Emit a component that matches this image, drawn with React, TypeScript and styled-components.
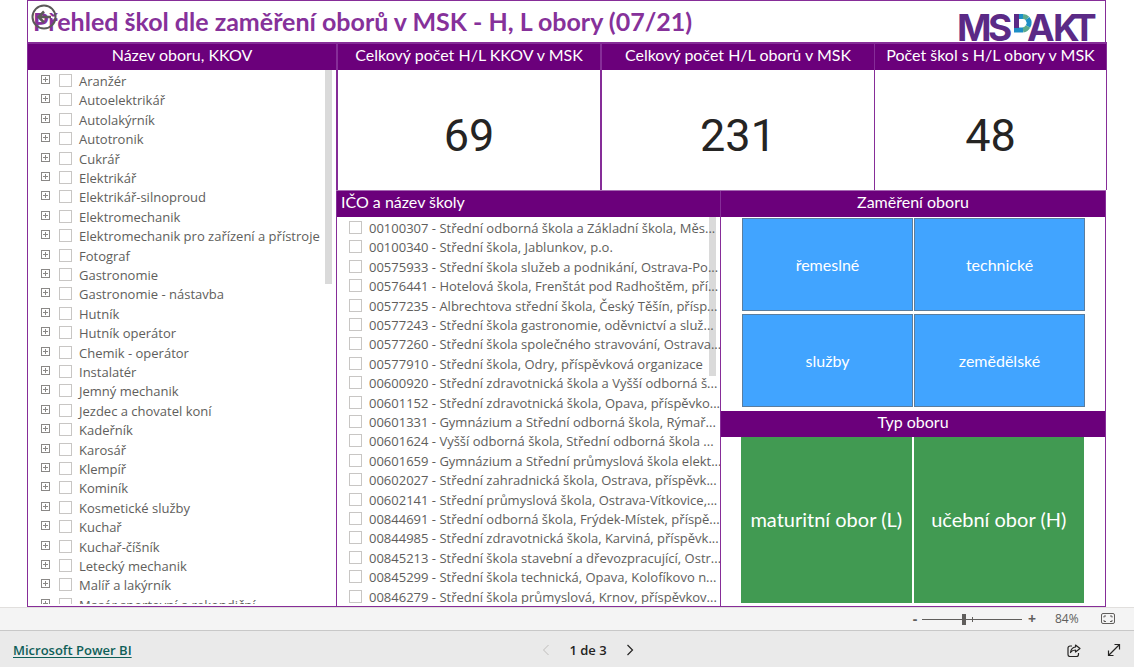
import React from 'react';
import styled, { createGlobalStyle } from 'styled-components';

const Global = createGlobalStyle`
  *, *::before, *::after { box-sizing: border-box; }
  html, body { margin: 0; padding: 0; background: #fff; }
  button, input { font: inherit; margin: 0; }
`;

const purple = '#6b007b';
const line = '#862d98';
const uiFont = `'Open Sans', 'Noto Sans', sans-serif`;
const headFont = `Lato, 'Open Sans', sans-serif`;

const Page = styled.div`
  display: flex;
  flex-direction: column;
  height: 100vh;
  min-height: 480px;
  font-family: ${uiFont};
  color: #605e5c;
`;

const Report = styled.main`
  flex: 1;
  min-height: 0;
  display: flex;
  flex-direction: column;
  padding: 0 27px;
`;

const TitleBar = styled.header`
  position: relative;
  display: flex;
  align-items: center;
  justify-content: space-between;
  height: 42px;
  flex: none;
  margin-right: 1px;
  padding: 0 10px 0 5px;
  border: 1px solid ${line};
  border-bottom: 0;
`;

const Title = styled.h1`
  margin: 0;
  padding-bottom: 2px;
  font: 700 25px/38px ${headFont};
  color: #86319a;
  white-space: nowrap;
`;

const BackButton = styled.button`
  position: absolute;
  left: 3px;
  top: 3px;
  width: 26px;
  height: 26px;
  padding: 0;
  border: 0;
  background: none;
  color: #5b5a58;
  svg { display: block; }
`;

const Logo = styled.svg`
  display: block;
  flex: none;
  align-self: flex-end;
  overflow: visible;
`;

const Body = styled.div`
  flex: 1;
  min-height: 0;
  display: grid;
  grid-template-columns: 309fr 771fr;
  border-top: 2px solid ${line};
`;

const Side = styled.div`
  min-height: 0;
  min-width: 0;
  display: flex;
  flex-direction: column;
`;

const Cards = styled.div`
  display: grid;
  grid-template-columns: 264fr 274fr 233fr;
  height: 146px;
  flex: none;
`;

const Lower = styled.div`
  flex: 1;
  min-height: 0;
  display: grid;
  grid-template-columns: 384fr 386fr;
  margin-right: 1px;
  border-top: 1px solid #a66bb2;
`;

const Panel = styled.section<{ $last?: boolean; $grow?: number; $edge?: number }>`
  display: flex;
  flex-direction: column;
  min-width: 0;
  min-height: 0;
  flex: ${p => p.$grow || 'none'};
  border: 0 solid ${line};
  border-left-width: ${p => p.$edge || 1}px;
  border-right-width: ${p => (p.$last ? 1 : 0)}px;
`;

const Framed = styled(Panel)`
  border-bottom-width: 1px;
`;

const PanelTitle = styled.h2<{ $left?: boolean }>`
  flex: none;
  margin: 0;
  padding: 0 4px 4px;
  background: ${purple};
  color: #fff;
  font: 400 16px/22px ${headFont};
  text-align: ${p => (p.$left ? 'left' : 'center')};
  white-space: nowrap;
`;

const Value = styled.output`
  flex: 1;
  display: flex;
  align-items: center;
  justify-content: center;
  padding-top: 12px;
  font: 400 45px/48px Roboto, sans-serif;
  color: #252423;
`;

const Scroller = styled.div<{ $gutter: number }>`
  position: relative;
  isolation: isolate;
  flex: 1;
  min-height: 0;
  margin-bottom: 2px;
  padding-right: ${p => p.$gutter}px;
  overflow: hidden;
`;

const List = styled.ul<{ $indent: number }>`
  display: grid;
  grid-template-columns: 100%;
  grid-auto-rows: 19px 20px 19px 20px 19px;
  align-content: start;
  margin: 0;
  padding: 2px 0 0 ${p => p.$indent}px;
  list-style: none;
`;

const Item = styled.li`
  display: flex;
  align-items: flex-start;
  min-width: 0;
`;

const Expand = styled.button`
  width: 9px;
  height: 9px;
  flex: none;
  margin: 3px 9px 0 0;
  padding: 0;
  border: 0;
  background: none;
  svg { display: block; }
`;

const Choice = styled.label`
  display: flex;
  align-items: flex-start;
  font: 400 13px/19px ${uiFont};
  white-space: nowrap;
`;

const Box = styled.input`
  appearance: none;
  flex: none;
  width: 13px;
  height: 13px;
  margin: 2px 7px 0 0;
  border: 1px solid #c8c6c4;
  background: #fff;
  &:checked { background: #605e5c; }
`;

const Thumb = styled.div<{ $h: string }>`
  position: absolute;
  top: 0;
  right: 4px;
  z-index: -1;
  width: 7px;
  height: ${p => p.$h};
  background: #dadada;
`;

const Tiles = styled.div<{ $green?: boolean }>`
  flex: 1;
  display: grid;
  grid-template-columns: 1fr 1fr;
  gap: ${p => (p.$green ? '0 2px' : '3px 1px')};
  padding: ${p => (p.$green ? '0 21px 3px 20px' : '1px 20px 4px 21px')};
`;

const Tile = styled.button<{ $green?: boolean }>`
  min-width: 0;
  padding: 0 0 ${p => (p.$green ? 2 : 0)}px;
  border: ${p => (p.$green ? 0 : '1px solid #5a7d9f')};
  background: ${p => (p.$green ? '#419a52' : '#41a4ff')};
  color: #fff;
  font: 400 ${p => (p.$green ? '20px/26px' : '16px/20px')} ${headFont};
`;

const ZoomBar = styled.div`
  display: flex;
  align-items: center;
  justify-content: flex-end;
  height: 24px;
  flex: none;
  padding-right: 18px;
  border-top: 1px solid #e1dfdd;
  border-bottom: 1px solid #c8c8c8;
  background: #f4f4f4;
  font-size: 12px;
`;

const ZoomButton = styled.button`
  width: 10px;
  padding: 0;
  border: 0;
  background: none;
  color: #605e5c;
  font: 700 14px/16px ${uiFont};
`;

const Range = styled.input`
  appearance: none;
  width: 100px;
  height: 16px;
  margin: 0 5px 0 2px;
  background:
    linear-gradient(#605e5c, #605e5c) 50px 50% / 1px 5px no-repeat,
    linear-gradient(#605e5c, #605e5c) 0 50% / 100% 1px no-repeat;
  &::-webkit-slider-thumb {
    appearance: none;
    width: 4px;
    height: 11px;
    background: #605e5c;
  }
`;

const Percent = styled.output`
  width: 24px;
  margin: 0 22px 0 18px;
  line-height: 16px;
`;

const IconButton = styled.button`
  padding: 0;
  border: 0;
  background: none;
  color: #252423;
  svg { display: block; }
`;

const Footer = styled.footer`
  display: grid;
  grid-template-columns: 1fr auto 1fr;
  align-items: center;
  height: 36px;
  flex: none;
  padding: 2px 13px 0;
  background: #eaeaea;
  a {
    justify-self: start;
    color: #0f5f59;
    font: 600 13px/20px ${uiFont};
    text-underline-offset: 2px;
  }
`;

const Pager = styled.nav`
  display: flex;
  align-items: center;
  gap: 19px;
  padding-left: 42px;
  color: #252423;
  font: 600 13px/20px ${uiFont};
`;

const Actions = styled.div`
  display: flex;
  align-items: center;
  justify-content: flex-end;
  gap: 26px;
`;

const fields = [
  'Aranžér', 'Autoelektrikář', 'Autolakýrník', 'Autotronik', 'Cukrář', 'Elektrikář',
  'Elektrikář-silnoproud', 'Elektromechanik', 'Elektromechanik pro zařízení a přístroje',
  'Fotograf', 'Gastronomie', 'Gastronomie - nástavba', 'Hutník', 'Hutník operátor',
  'Chemik - operátor', 'Instalatér', 'Jemný mechanik', 'Jezdec a chovatel koní', 'Kadeřník',
  'Karosář', 'Klempíř', 'Kominík', 'Kosmetické služby', 'Kuchař', 'Kuchař-číšník',
  'Letecký mechanik', 'Malíř a lakýrník', 'Masér sportovní a rekondiční',
];

const schools = [
  '00100307 - Střední odborná škola a Základní škola, Měs...',
  '00100340 - Střední škola, Jablunkov, p.o.',
  '00575933 - Střední škola služeb a podnikání, Ostrava-Po...',
  '00576441 - Hotelová škola, Frenštát pod Radhoštěm, pří...',
  '00577235 - Albrechtova střední škola, Český Těšín, přísp...',
  '00577243 - Střední škola gastronomie, oděvnictví a služ...',
  '00577260 - Střední škola společného stravování, Ostrava...',
  '00577910 - Střední škola, Odry, příspěvková organizace',
  '00600920 - Střední zdravotnická škola a Vyšší odborná š...',
  '00601152 - Střední zdravotnická škola, Opava, příspěvko...',
  '00601331 - Gymnázium a Střední odborná škola, Rýmař...',
  '00601624 - Vyšší odborná škola, Střední odborná škola ...',
  '00601659 - Gymnázium a Střední průmyslová škola elekt...',
  '00602027 - Střední zahradnická škola, Ostrava, příspěvk...',
  '00602141 - Střední průmyslová škola, Ostrava-Vítkovice,...',
  '00844691 - Střední odborná škola, Frýdek-Místek, příspě...',
  '00844985 - Střední zdravotnická škola, Karviná, příspěvk...',
  '00845213 - Střední škola stavební a dřevozpracující, Ostr...',
  '00845299 - Střední škola technická, Opava, Kolofíkovo n...',
  '00846279 - Střední škola průmyslová, Krnov, příspěvkov...',
];

const cards = [
  { title: 'Celkový počet H/L KKOV v MSK', value: 69 },
  { title: 'Celkový počet H/L oborů v MSK', value: 231 },
  { title: 'Počet škol s H/L obory v MSK', value: 48 },
];

function CheckRow({ text, expandable }: { text: string; expandable?: boolean }) {
  return (
    <Item>
      {expandable && (
        <Expand aria-label={`Rozbalit ${text}`}>
          <svg width="9" height="9" viewBox="0 0 9 9" fill="none" stroke="#8a8886">
            <rect x=".5" y=".5" width="8" height="8" />
            <path d="M2 4.500h5M4.500 2v5" />
          </svg>
        </Expand>
      )}
      <Choice>
        <Box type="checkbox" />
        <span>{text}</span>
      </Choice>
    </Item>
  );
}

export default function App() {
  return (
    <Page>
      <Global />
      <Report>
        <TitleBar>
          <Title>Přehled škol dle zaměření oborů v MSK - H, L obory (07/21)</Title>
          <BackButton aria-label="Zpět">
            <svg width="26" height="26" viewBox="0 0 26 26" fill="none" stroke="currentColor" strokeWidth="2">
              <circle cx="13" cy="13" r="11.500" />
              <path d="M20 13H8M13 7.500L7.500 13l5.500 5.500" strokeWidth="2.500" />
            </svg>
          </BackButton>
          <Logo width="136" height="28" viewBox="0 0 136 28" role="img" aria-label="MSPAKT">
            <g fill="#5b2a86" fontFamily="Inter, sans-serif" fontWeight="700" fontSize="37">
              <text x="-2 29" y="27">MS</text>
              <text x="68 94 113" y="27">AKT</text>
            </g>
            <g fill="none" strokeWidth="5">
              <path d="M55 2.500h5" stroke="#5b2a86" />
              <path d="M60 2.500h4" stroke="#1d8fc6" />
              <path d="M64 2.500a7 7 0 0 1 4.500 2" stroke="#5bab8f" />
              <path d="M68.500 4.500a7 7 0 0 1 .5 8" stroke="#1d8fc6" />
              <path d="M69 12.500a7 7 0 0 1-5 3.500" stroke="#5bab8f" />
              <path d="M64 16h-9" stroke="#1d8fc6" />
              <path d="M57.500 4v10" stroke="#5b2a86" />
            </g>
          </Logo>
        </TitleBar>
        <Body>
          <Framed $grow={1}>
            <PanelTitle>Název oboru, KKOV</PanelTitle>
            <Scroller $gutter={12}>
              <List $indent={13}>
                {fields.map(f => <CheckRow key={f} text={f} expandable />)}
              </List>
              <Thumb $h="40%" />
            </Scroller>
          </Framed>
          <Side>
            <Cards>
              {cards.map((c, i) => (
                <Panel key={c.title} $last={i === 2} $edge={i === 2 ? 1 : 2}>
                  <PanelTitle>{c.title}</PanelTitle>
                  <Value>{c.value}</Value>
                </Panel>
              ))}
            </Cards>
            <Lower>
              <Framed $grow={1}>
                <PanelTitle $left>IČO a název školy</PanelTitle>
                <Scroller $gutter={0}>
                  <List $indent={12}>
                    {schools.map(s => <CheckRow key={s} text={s} />)}
                  </List>
                  <Thumb $h="41%" />
                </Scroller>
              </Framed>
              <Side>
                <Panel $last $grow={221}>
                  <PanelTitle>Zaměření oboru</PanelTitle>
                  <Tiles>
                    <Tile>řemeslné</Tile>
                    <Tile>technické</Tile>
                    <Tile>služby</Tile>
                    <Tile>zemědělské</Tile>
                  </Tiles>
                </Panel>
                <Framed $last $grow={195}>
                  <PanelTitle>Typ oboru</PanelTitle>
                  <Tiles $green>
                    <Tile $green>maturitní obor (L)</Tile>
                    <Tile $green>učební obor (H)</Tile>
                  </Tiles>
                </Framed>
              </Side>
            </Lower>
          </Side>
        </Body>
      </Report>
      <ZoomBar>
        <ZoomButton aria-label="Oddálit">-</ZoomButton>
        <Range type="range" min={0} max={190} defaultValue={80} aria-label="Lupa" />
        <ZoomButton aria-label="Přiblížit">+</ZoomButton>
        <Percent>84%</Percent>
        <IconButton aria-label="Přizpůsobit stránce">
          <svg width="15" height="12" viewBox="0 0 15 12" fill="none" stroke="#605e5c">
            <rect x=".5" y=".5" width="13" height="10" rx="1.500" />
            <path d="M3 4.500V3h2M9 3h2v1.500M11 7v1.500H9M5 8.500H3V7" />
          </svg>
        </IconButton>
      </ZoomBar>
      <Footer>
        <a href="#powerbi">Microsoft Power BI</a>
        <Pager aria-label="Stránky">
          <IconButton aria-label="Předchozí">
            <svg width="8" height="12" viewBox="0 0 8 12" fill="none" stroke="#c0bebc"><path d="M6.500 1L1.500 6l5 5" /></svg>
          </IconButton>
          <span>1 de 3</span>
          <IconButton aria-label="Další">
            <svg width="8" height="12" viewBox="0 0 8 12" fill="none" stroke="#252423" strokeWidth="1.200"><path d="M1.500 1l5 5-5 5" /></svg>
          </IconButton>
        </Pager>
        <Actions>
          <IconButton aria-label="Sdílet">
            <svg width="14" height="13" viewBox="0 0 14 13" fill="none" stroke="currentColor" strokeWidth="1.200">
              <path d="M5 2H3a2 2 0 0 0-2 2v6.500a2 2 0 0 0 2 2h6.500a2 2 0 0 0 2-2V9" />
              <path d="M8.500 1l4.500 3.500L8.500 8V6C6 6 4.500 7 3.500 8.500 4 5 6 3.200 8.500 3z" strokeLinejoin="round" />
            </svg>
          </IconButton>
          <IconButton aria-label="Celá obrazovka">
            <svg width="14" height="14" viewBox="0 0 14 14" fill="none" stroke="currentColor" strokeWidth="1.200">
              <path d="M1.500 12.500l11-11M7.500 1.500h5v5M1.500 7.500v5h5" />
            </svg>
          </IconButton>
        </Actions>
      </Footer>
    </Page>
  );
}
